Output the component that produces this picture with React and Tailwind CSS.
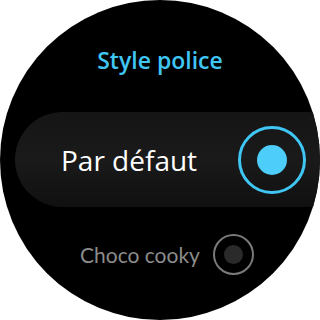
export default function App() {
  return (
    <div className="w-80 h-80 bg-white">
      <div className="w-80 h-80 rounded-full bg-black overflow-hidden flex flex-col" style={{ fontFamily: '"Open Sans", "Noto Sans", sans-serif' }}>
        <div className="pt-[45px] h-[112px] text-center text-[23px] leading-[30px] font-semibold text-[#3fc6f4]">
          Style police
        </div>
        <div className="ml-[15px] h-[95px] w-[340px] shrink-0 rounded-full bg-gradient-to-b from-[#151515] via-[#1a1a1a] to-[#101010] flex items-center">
          <span className="ml-[46px] w-[177px] text-[28px] leading-[40px] text-white">Par défaut</span>
          <div className="w-[68px] h-[68px] rounded-full border-[3px] border-[#3fc6f4] flex items-center justify-center">
            <div className="w-[30px] h-[30px] rounded-full bg-[#4ccdfa]" />
          </div>
        </div>
        <div className="mt-[27px] pl-[80px] flex items-center">
          <span className="w-[133px] text-[21px] leading-[28px] text-[#8c8c8c]" style={{ fontFamily: '"Lato", sans-serif' }}>Choco cooky</span>
          <div className="w-[41px] h-[41px] rounded-full border-2 border-[#7a7a7a] flex items-center justify-center">
            <div className="w-[19px] h-[19px] rounded-full bg-[#2a2a2a]" />
          </div>
        </div>
      </div>
    </div>
  );
}
